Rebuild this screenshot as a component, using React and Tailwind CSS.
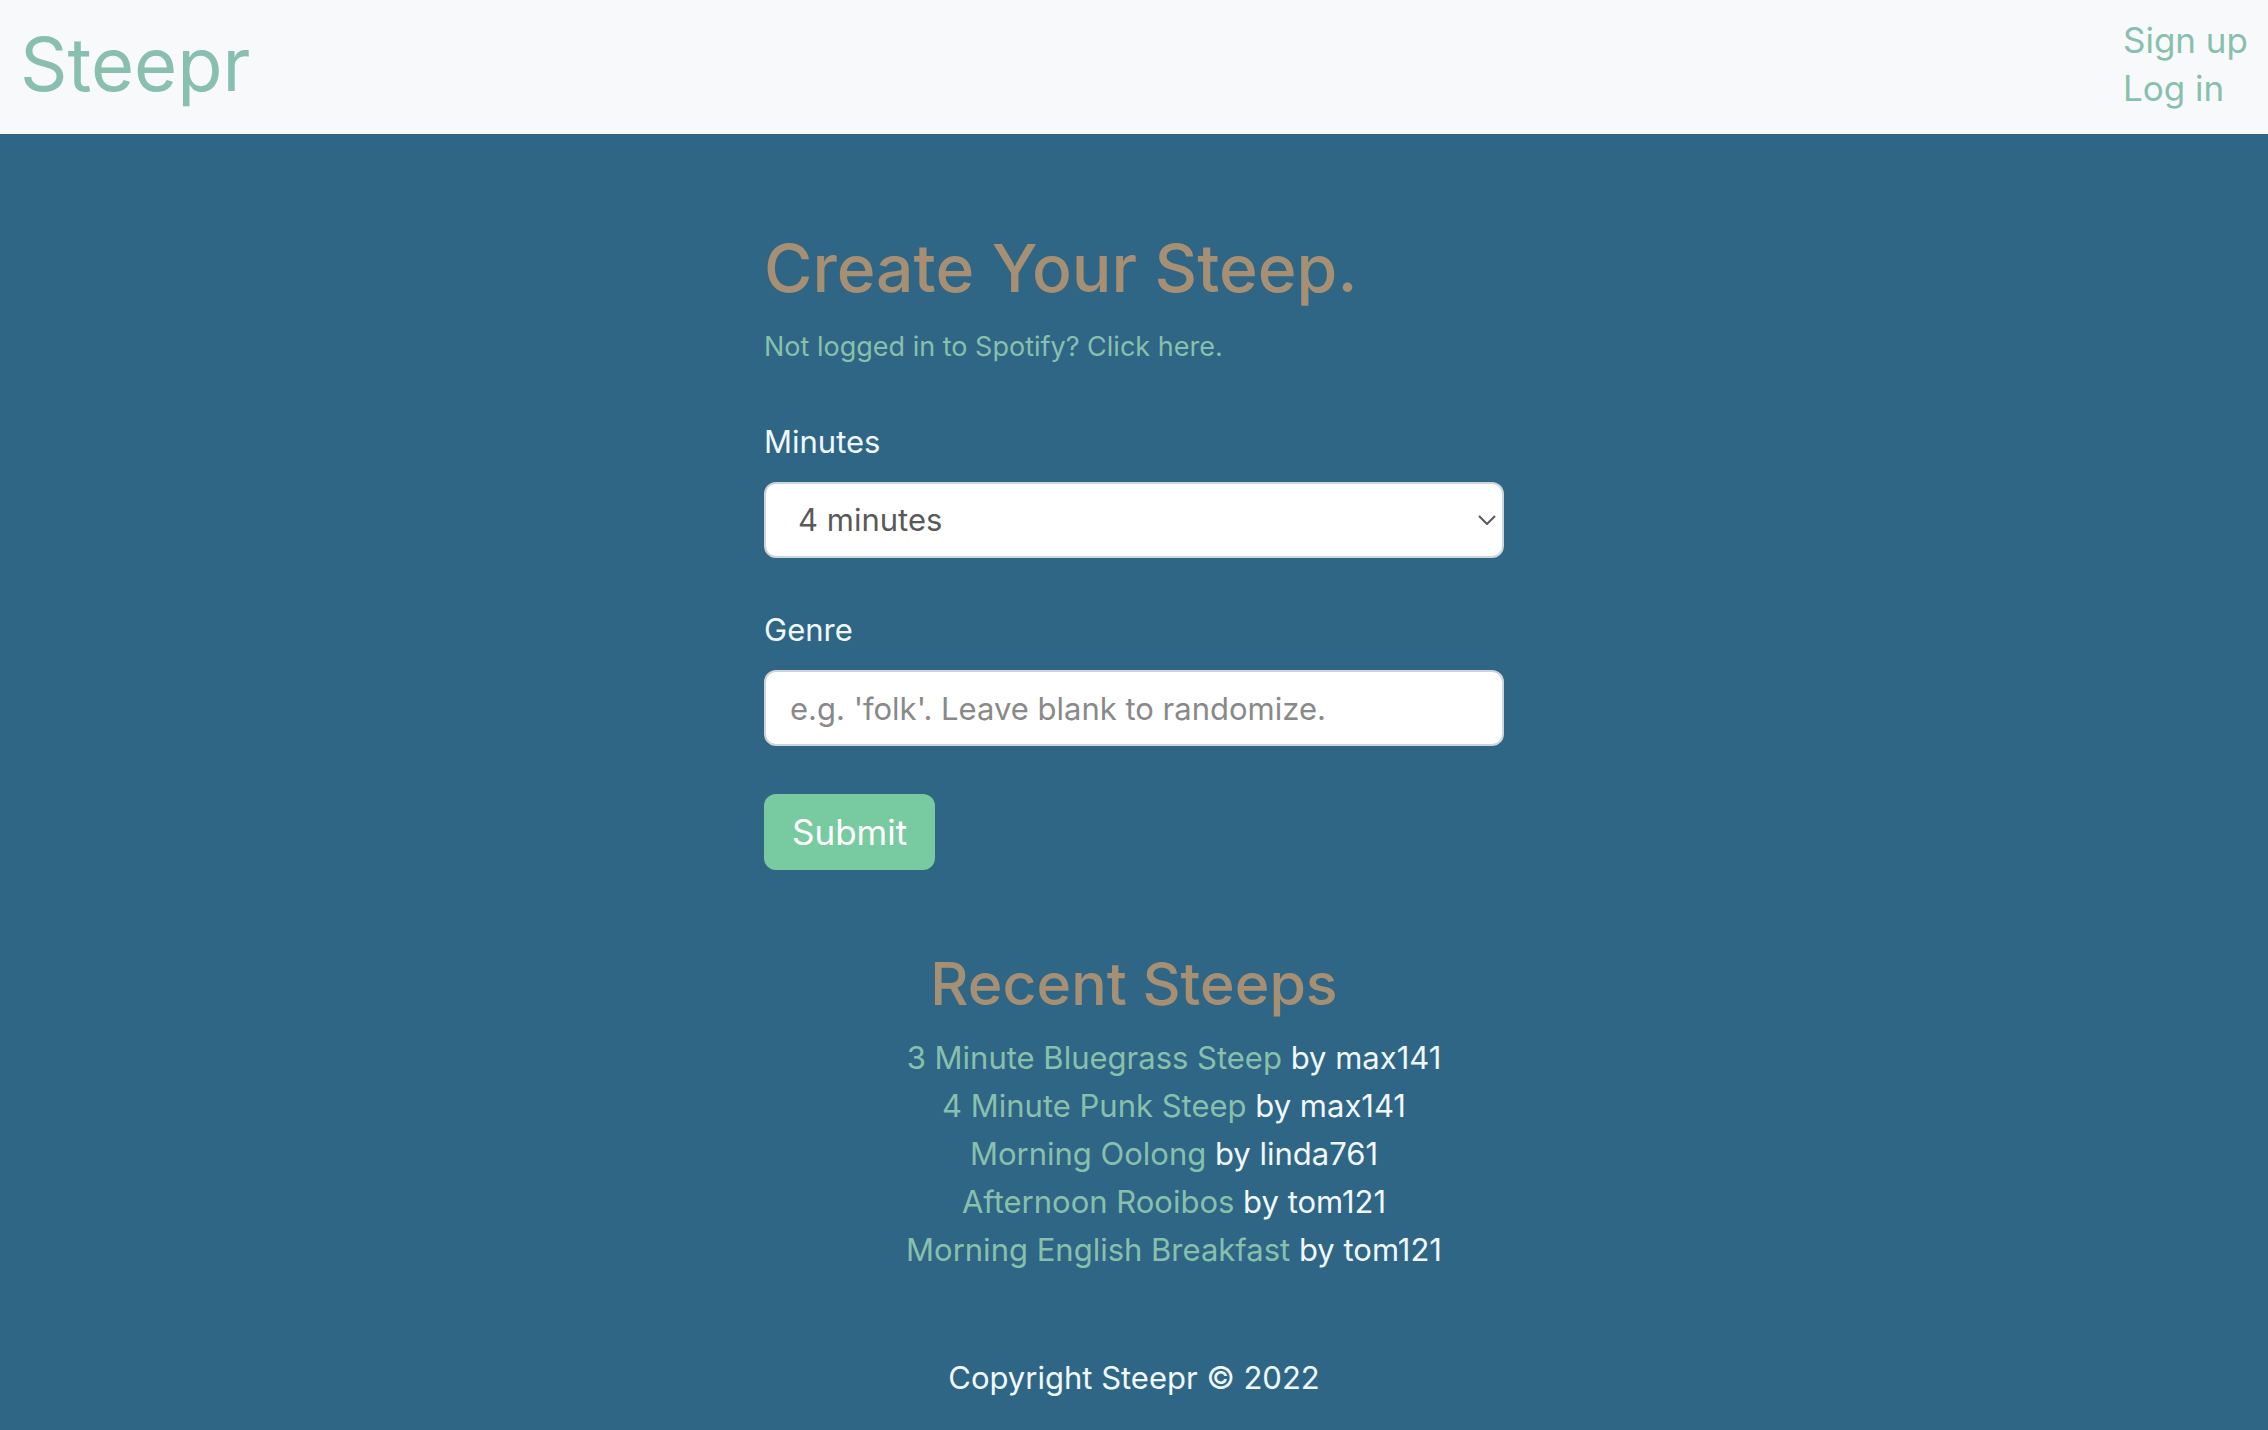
import React from "react";

const steeps = [
  { title: "3 Minute Bluegrass Steep", user: "max141" },
  { title: "4 Minute Punk Steep", user: "max141" },
  { title: "Morning Oolong", user: "linda761" },
  { title: "Afternoon Rooibos", user: "tom121" },
  { title: "Morning English Breakfast", user: "tom121" },
];

function Header() {
  return (
    <header className="flex items-start justify-between bg-[#f8f9fb] pt-4 pr-5 pb-[22px] pl-5 text-[#88c0ad]">
      <a href="#home" className="text-[74px] leading-[96px]">
        Steepr
      </a>
      <nav className="flex flex-col text-[35px] leading-[48px]">
        <a href="#signup">Sign up</a>
        <a href="#login">Log in</a>
      </nav>
    </header>
  );
}

function SteepForm() {
  return (
    <form className="mx-auto w-full max-w-[740px]" onSubmit={(e) => e.preventDefault()}>
      <h1 className="text-[66px] font-medium leading-[76px] text-[#a68f73]">Create Your Steep.</h1>
      <a href="#spotify" className="mt-5 block text-[27px] leading-[42px] text-[#88c0ad]">
        Not logged in to Spotify? Click here.
      </a>
      <label htmlFor="minutes" className="mt-[50px] block text-[31px] leading-[48px]">
        Minutes
      </label>
      <div className="relative mt-4">
        <select
          id="minutes"
          defaultValue="4"
          className="block h-19 w-full appearance-none rounded-xl border-2 border-[#ced4da] bg-white pl-8 pr-12 text-[31px] text-[#595959]"
        >
          <option value="3">3 minutes</option>
          <option value="4">4 minutes</option>
          <option value="5">5 minutes</option>
        </select>
        <svg
          className="pointer-events-none absolute right-2 top-[33px] h-[10px] w-[18px]"
          viewBox="0 0 18 10"
          fill="none"
          stroke="#595959"
          strokeWidth="2"
          aria-hidden="true"
        >
          <path d="M1 1 L9 9 L17 1" />
        </svg>
      </div>
      <label htmlFor="genre" className="mt-12 block text-[31px] leading-[48px]">
        Genre
      </label>
      <input
        id="genre"
        type="text"
        placeholder="e.g. 'folk'. Leave blank to randomize."
        className="mt-4 block h-19 w-full rounded-xl border-2 border-[#ced4da] bg-white px-6 text-[31px] text-[#595959] placeholder:text-[#898989]"
      />
      <button type="submit" className="mt-12 block h-19 rounded-xl bg-[#78cba1] px-7 text-[35px] text-white">
        Submit
      </button>
    </form>
  );
}

function RecentSteeps() {
  return (
    <section className="mt-20 text-center">
      <h2 className="text-[59px] font-medium leading-[68px] text-[#a68f73]">Recent Steeps</h2>
      <ul className="mt-4 pl-20 text-[31px] leading-[48px]">
        {steeps.map((s) => (
          <li key={s.title}>
            <a href="#steep" className="text-[#88c0ad]">
              {s.title}
            </a>{" "}
            by {s.user}
          </li>
        ))}
      </ul>
    </section>
  );
}

export default function App() {
  return (
    <div className="min-h-screen bg-[#2f6685] font-['Inter',sans-serif] text-[#f0f8ff]">
      <Header />
      <main className="pt-24">
        <SteepForm />
        <RecentSteeps />
      </main>
      <footer className="pt-20 pb-6 text-center text-[31px] leading-[48px]">Copyright Steepr © 2022</footer>
    </div>
  );
}
